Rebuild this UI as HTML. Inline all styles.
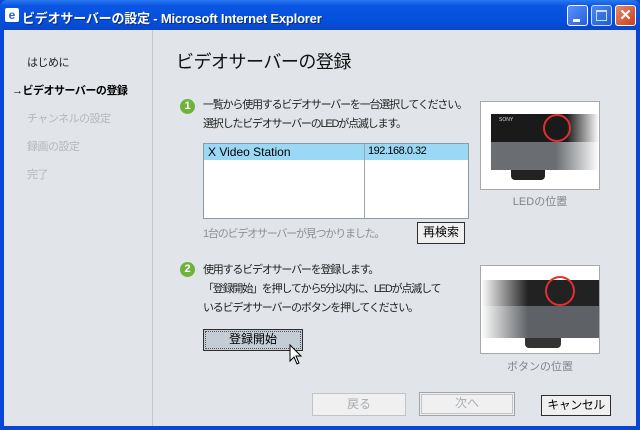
<!DOCTYPE html>
<html><head><meta charset="utf-8"><style>
*{margin:0;padding:0;box-sizing:border-box}
body{width:640px;height:430px;overflow:hidden;font-family:"Liberation Sans","Noto Sans CJK JP",sans-serif;background:#0846d8;position:relative}
.abs{position:absolute}
#title{left:0;top:0;width:640px;height:30px;background:linear-gradient(#2a78f0,#0a55e2 20%,#0450dc 70%,#0a45c8);border-radius:7px 7px 0 0}
#ttext{left:22px;top:8px;color:#fff;font-size:13px;font-weight:bold;letter-spacing:-.2px;text-shadow:1px 1px #0a2a80}
.wb{top:5px;width:21px;height:21px;border:1px solid #fff;border-radius:3px;background:linear-gradient(135deg,#5b93f5,#2460e0)}
#client{left:4px;top:30px;width:632px;height:396px;background:#e1e4e8}
#left{left:0;top:0;width:149px;height:396px;background:#e1e4e8;border-right:1px solid #c4c8cc}
.nav{left:23px;font-size:11px;color:#222;letter-spacing:-.5px}
.dis{color:#b4b8bc}
.t{font-size:11px;color:#222;line-height:19px;letter-spacing:-1.2px;white-space:nowrap}
.num{width:15px;height:15px;border-radius:50%;background:#6fb23a;color:#fff;font-size:11px;font-weight:bold;text-align:center;line-height:15px}
.btn{border:1px solid #2d2d2d;background:#f0f0f0;font-size:12px;text-align:center;color:#000}
.img{background:#fff;border:1px solid #a8a8a8;overflow:hidden}
.cap{font-size:11px;color:#808488;text-align:center;width:120px}
</style></head><body>
<div id="title" class="abs"></div>
<div class="abs" style="left:5px;top:8px;width:14px;height:14px;background:#fff;border-radius:2px;color:#2a62d0;font-size:12px;font-weight:bold;line-height:14px;text-align:center">e</div>
<div id="ttext" class="abs">ビデオサーバーの設定 - Microsoft Internet Explorer</div>
<div class="abs wb" style="left:567px"><div class="abs" style="left:5px;top:13px;width:7px;height:3px;background:#fff"></div></div>
<div class="abs wb" style="left:591px;opacity:.8"><div class="abs" style="left:4px;top:4px;width:11px;height:11px;border:1px solid #fff;border-top-width:2px"></div></div>
<div class="abs wb" style="left:615px;width:21px;background:linear-gradient(135deg,#e8876a,#c8401c);color:#fff;font-weight:bold;font-size:15px;line-height:19px;text-align:center">✕</div>
<div id="client" class="abs">
 <div id="left" class="abs"></div>
 <div class="abs nav" style="top:24px">はじめに</div>
 <div class="abs nav" style="left:8px;top:52px;font-weight:bold;color:#000">→ビデオサーバーの登録</div>
 <div class="abs nav dis" style="top:80px">チャンネルの設定</div>
 <div class="abs nav dis" style="top:108px">録画の設定</div>
 <div class="abs nav dis" style="top:136px">完了</div>
 <div class="abs" style="left:172px;top:18px;font-size:18px;color:#111;letter-spacing:-.5px">ビデオサーバーの登録</div>

 <div class="abs num" style="left:176px;top:69px">1</div>
 <div class="abs t" style="left:199px;top:66px">一覧から使用するビデオサーバーを一台選択してください。<br>選択したビデオサーバーのLEDが点滅します。</div>
 <div class="abs" style="left:199px;top:113px;width:266px;height:76px;background:#fff;border:1px solid #8c9aa8">
  <div class="abs" style="left:0;top:0;width:264px;height:16px;background:#9ad8f6"></div>
  <div class="abs" style="left:160px;top:0;width:1px;height:74px;background:#9aa4ae"></div>
  <div class="abs" style="left:4px;top:1px;font-size:12px">X Video Station</div>
  <div class="abs" style="left:164px;top:1px;font-size:11px;letter-spacing:-.5px">192.168.0.32</div>
 </div>
 <div class="abs t" style="left:199px;top:195px;color:#8c9094">1台のビデオサーバーが見つかりました。</div>
 <div class="abs btn" style="left:413px;top:192px;width:48px;height:22px;line-height:19px">再検索</div>
 <div class="abs img" style="left:476px;top:71px;width:120px;height:89px">
  <div class="abs" style="left:10px;top:12px;width:108px;height:28px;background:linear-gradient(90deg,#1a1a1a 70%,#fff)"></div>
  <div class="abs" style="left:10px;top:40px;width:108px;height:28px;background:linear-gradient(90deg,#6a6e72 60%,#fff)"></div>
  <div class="abs" style="left:30px;top:68px;width:34px;height:10px;background:#222;border-radius:0 0 4px 4px"></div>
  <div class="abs" style="left:62px;top:12px;width:28px;height:28px;border:2px solid #e03030;border-radius:50%"></div>
  <div class="abs" style="left:18px;top:15px;color:#ddd;font-size:5px">SONY</div>
 </div>
 <div class="abs cap" style="left:476px;top:163px">LEDの位置</div>

 <div class="abs num" style="left:176px;top:232px">2</div>
 <div class="abs t" style="left:199px;top:231px">使用するビデオサーバーを登録します。<br>「登録開始」を押してから5分以内に、LEDが点滅して<br>いるビデオサーバーのボタンを押してください。</div>
 <div class="abs btn" style="left:199px;top:299px;width:100px;height:22px;line-height:19px;background:#c4ccd4;outline:1px dotted #555;outline-offset:-3px">登録開始</div>
 <svg class="abs" style="left:285px;top:314px" width="14" height="22" viewBox="0 0 14 22"><path d="M1 1 L1 17 L5 13 L8 20 L10 19 L7 12 L12 12 Z" fill="#fff" stroke="#000" stroke-width="1"/></svg>
 <div class="abs img" style="left:476px;top:235px;width:120px;height:89px">
  <div class="abs" style="left:0;top:14px;width:118px;height:26px;background:linear-gradient(90deg,#fff,#222 40%)"></div>
  <div class="abs" style="left:0;top:40px;width:118px;height:32px;background:linear-gradient(90deg,#fff,#5e6266 40%)"></div>
  <div class="abs" style="left:44px;top:72px;width:36px;height:10px;background:#333;border-radius:0 0 4px 4px"></div>
  <div class="abs" style="left:64px;top:10px;width:30px;height:30px;border:2px solid #e03030;border-radius:50%"></div>
 </div>
 <div class="abs cap" style="left:476px;top:328px">ボタンの位置</div>

 <div class="abs btn" style="left:308px;top:363px;width:94px;height:23px;line-height:21px;color:#a8acb0;border-color:#c0c4c8">戻る</div>
 <div class="abs btn" style="left:415px;top:362px;width:96px;height:24px;line-height:21px;color:#a8acb0;border-color:#a0a4a8;outline:1px solid #c0c4c8;outline-offset:-3px">次へ</div>
 <div class="abs btn" style="left:537px;top:365px;width:70px;height:21px;line-height:19px;letter-spacing:-.5px">キャンセル</div>
</div>
</body></html>
